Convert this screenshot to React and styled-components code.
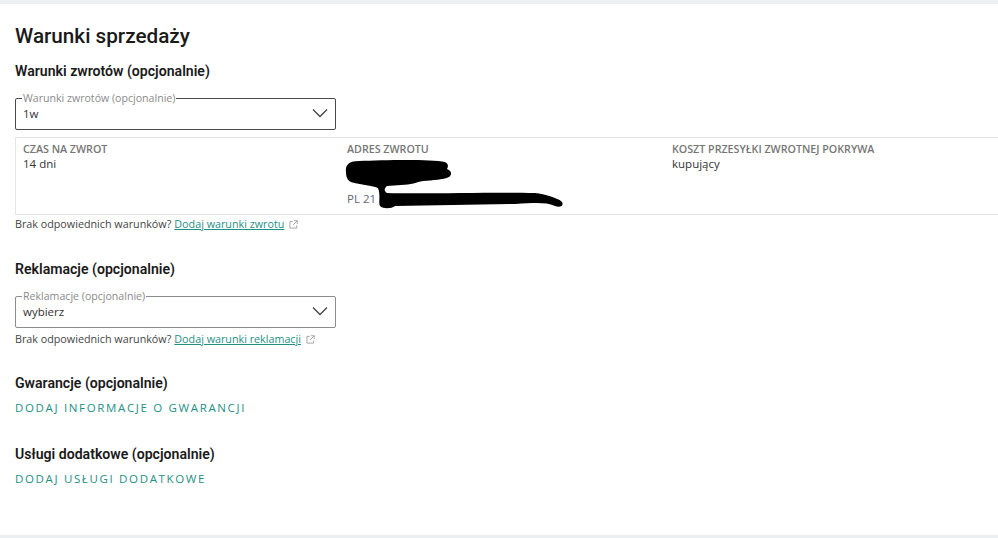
import React from 'react'
import styled, { createGlobalStyle } from 'styled-components'

const GlobalStyle = createGlobalStyle`
  html, body {
    margin: 0;
    padding: 0;
    background: #fff;
    overflow: hidden;
  }
  * {
    box-sizing: border-box;
  }
`

const Page = styled.div`
  width: 998px;
  height: 538px;
  display: flex;
  flex-direction: column;
  border-top: 4px solid #eceff1;
  border-bottom: 3px solid #eceff1;
  background: #fff;
  overflow: hidden;
  font-family: "Open Sans", sans-serif;
  color: #222;
`

const Content = styled.div`
  padding: 19px 0 0 15px;
`

const Title = styled.h1`
  margin: 0 0 11px;
  font-family: Roboto, sans-serif;
  font-size: 20.7px;
  line-height: 27px;
  font-weight: 500;
  color: #1a1a1a;
`

const Heading = styled.h2`
  margin: 0;
  font-family: Roboto, sans-serif;
  font-size: 14.1px;
  line-height: 20px;
  font-weight: 600;
  color: #1a1a1a;
`

const Section = styled.section`
  margin-top: ${props => props.$top || 0}px;
`

const SelectBox = styled.fieldset`
  position: relative;
  width: 321px;
  height: 38px;
  margin: 0;
  padding: 0 7px;
  border: ${props => props.$active ? '1.5px solid #4a4a4a' : '1px solid #8c8c8c'};
  border-radius: 2px;
  display: flex;
  align-items: center;
`

const SelectLegend = styled.legend`
  padding: 0 1px;
  margin-left: -1px;
  font-size: 10.6px;
  line-height: 12px;
  color: #8a8a8a;
`

const SelectValue = styled.span`
  font-size: 11.5px;
  line-height: 16px;
  margin-top: -6px;
  color: #333;
`

const Chevron = styled.svg`
  position: absolute;
  right: 7px;
  top: 4px;
  width: 16px;
  height: 10px;
`

const Terms = styled.div`
  position: relative;
  display: grid;
  grid-template-columns: 324px 325px 340px;
  width: 1000px;
  height: 78px;
  margin-top: 7px;
  border: 1px solid #e4e4e4;
`

const TermsCell = styled.div`
  padding: 4px 7px 0;
  overflow: hidden;
`

const TermsLabel = styled.div`
  font-size: 10.7px;
  line-height: 14px;
  font-weight: 600;
  color: #767676;
  white-space: nowrap;
`

const TermsValue = styled.div`
  font-size: 11.5px;
  line-height: 15px;
  color: ${props => props.$muted ? '#667' : '#333'};
  margin-top: ${props => props.$top || 0}px;
`

const Scribble = styled.svg`
  position: absolute;
  left: 329px;
  top: 22px;
  width: 230px;
  height: 52px;
`

const Note = styled.p`
  display: flex;
  align-items: center;
  margin: ${props => props.$top || 2}px 0 0;
  font-size: 10.75px;
  line-height: 15px;
  color: #444;
`

const NoteLink = styled.a`
  margin-left: 3px;
  color: #1f8f86;
  text-decoration: underline;
`

const External = styled.svg`
  width: 9px;
  height: 9px;
  margin-left: 5px;
`

const ActionLink = styled.a`
  display: block;
  margin-top: 7px;
  font-size: 11.5px;
  line-height: 15px;
  letter-spacing: 1.65px;
  color: #1f8f86;
`

const ExternalIcon = () => (
  <External viewBox="0 0 10 10" fill="none" stroke="#8a8a8a" strokeWidth="0.8">
    <path d="M4 1.5H1v7.5h7.5V6" />
    <path d="M5.5 .8h3.7v3.7M9.2 .8 4.5 5.5" />
  </External>
)

const Select = ({ label, value, active }) => (
  <SelectBox $active={active}>
    <SelectLegend>{label}</SelectLegend>
    <SelectValue>{value}</SelectValue>
    <Chevron viewBox="0 0 16 10" fill="none" stroke="#444" strokeWidth="1.3">
      <path d="M1 1.5l7 7 7-7" />
    </Chevron>
  </SelectBox>
)

const App = () => (
  <Page>
    <GlobalStyle />
    <Content>
      <Title>Warunki sprzedaży</Title>

      <Section>
        <Heading>Warunki zwrotów (opcjonalnie)</Heading>
        <Section $top={11}>
          <Select label="Warunki zwrotów (opcjonalnie)" value="1w" active />
        </Section>
        <Terms>
          <TermsCell>
            <TermsLabel>CZAS NA ZWROT</TermsLabel>
            <TermsValue>14 dni</TermsValue>
          </TermsCell>
          <TermsCell>
            <TermsLabel>ADRES ZWROTU</TermsLabel>
            <TermsValue $top={35} $muted>PL 21</TermsValue>
          </TermsCell>
          <TermsCell>
            <TermsLabel>KOSZT PRZESYŁKI ZWROTNEJ POKRYWA</TermsLabel>
            <TermsValue>kupujący</TermsValue>
          </TermsCell>
          <Scribble viewBox="0 0 230 52" fill="#000">
            <path d="M1 12C0 5 4 1 14 1 40 0 85-1 100 2c4 2 3 5 2 7 5 2 5 6 2 8-6 3-16 3-26 4-6 1-12 4-22 4l-14 1c-2 2-4 4 0 7 38 1 108-1 148 0 10 1 22 5 26 8 4 4 0 7-6 5-10-4-20-3-40-2l-120 2c-4 3-12 3-15 0-2-4 1-10-2-18-3-2-21-4-27-6-4-2-5-6-5-10z" />
          </Scribble>
        </Terms>
        <Note>
          Brak odpowiednich warunków?
          <NoteLink>Dodaj warunki zwrotu</NoteLink>
          <ExternalIcon />
        </Note>
      </Section>

      <Section $top={27}>
        <Heading>Reklamacje (opcjonalnie)</Heading>
        <Section $top={11}>
          <Select label="Reklamacje (opcjonalnie)" value="wybierz" />
        </Section>
        <Note $top={4}>
          Brak odpowiednich warunków?
          <NoteLink>Dodaj warunki reklamacji</NoteLink>
          <ExternalIcon />
        </Note>
      </Section>

      <Section $top={26}>
        <Heading>Gwarancje (opcjonalnie)</Heading>
        <ActionLink>DODAJ INFORMACJE O GWARANCJI</ActionLink>
      </Section>

      <Section $top={29}>
        <Heading>Usługi dodatkowe (opcjonalnie)</Heading>
        <ActionLink>DODAJ USŁUGI DODATKOWE</ActionLink>
      </Section>
    </Content>
  </Page>
)

export default App
